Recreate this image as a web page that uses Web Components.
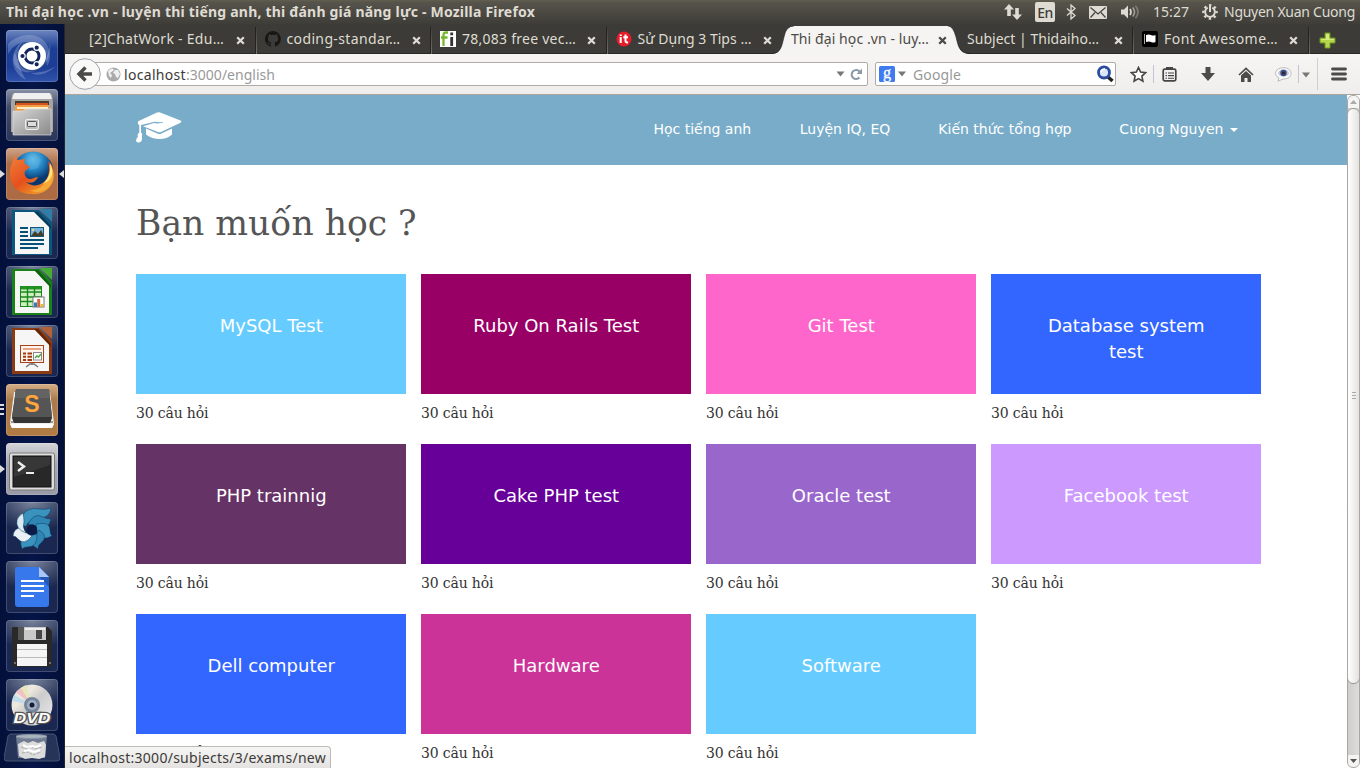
<!DOCTYPE html>
<html lang="vi">
<head>
<meta charset="utf-8">
<title>Thi đại học .vn</title>
<style>
html,body{margin:0;height:100%;overflow:hidden;background:#fff}
</style>
</head>
<body>
<desktop-screen></desktop-screen>
<script>
const UI = `"Noto Sans","Open Sans",sans-serif`;
const define = (name, html, after) => {
  const tpl = document.createElement('template');
  tpl.innerHTML = html;
  customElements.define(name, class extends HTMLElement {
    connectedCallback() {
      if (this.shadowRoot) return;
      const root = this.attachShadow({mode: 'open'});
      root.append(tpl.content.cloneNode(true));
      if (after) after(this, root);
    }
  });
};

/* One line of text whose tracking is adjusted to a given width. */
define('fit-text', `<style>:host{display:block;white-space:nowrap;flex:none}span{display:inline-block}</style><span><slot></slot></span>`, (el, root) => {
  const w = +el.getAttribute('w'), s = root.querySelector('span');
  el.style.width = w + 'px';
  requestAnimationFrame(() => {
    const n = [...el.textContent].length;
    s.style.letterSpacing = ((w - s.getBoundingClientRect().width) / n) + 'px';
  });
});

define('launcher-tile', `<style>
:host{display:block;position:relative;width:52px;height:52px;flex:none;box-sizing:border-box;border-radius:4px;background:var(--tile,radial-gradient(ellipse 90% 55% at 50% 0,#7a849d,#3a4768 60%,#1a2750));box-shadow:inset 0 0 0 1px #ffffff2b}
svg,::slotted(svg){display:block;width:52px;height:52px}
i{position:absolute;top:22px;width:0;height:0;border:4.5px solid transparent;display:none}
:host([run]) .l{display:block;left:-6px;border-left:5px solid #dcdcdc;border-right:0}
:host([focus]) .r{display:block;right:-6px;border-right:5px solid #dcdcdc;border-left:0}
b{display:none;position:absolute;left:-6px;top:20px;width:4px;height:12px;background:repeating-linear-gradient(#dcdcdc 0 2px,transparent 2px 4.5px)}
:host([multi]) b{display:block}
</style><slot></slot><i class="l"></i><i class="r"></i><b></b>`);

define('app-launcher', `<style>
:host{display:flex;flex-direction:column;align-items:flex-start;gap:7px;padding:6px 0 0 6px;box-sizing:border-box;background:linear-gradient(90deg,#03103a,#051548 50%,#03103a 95%);border-right:1px solid #24262e;height:744px;overflow:hidden}
.trash{display:block;margin:-5px 0 0 -2px;flex:none}
</style>
<launcher-tile style="--tile:linear-gradient(#6f87c0,#1c3f95 35%,#1c3d96 70%,#3053ab)"><svg viewBox="0 0 52 52">
<g fill="#c5d3ef" fill-opacity=".28"><path d="M2 14C14 2 34 2 41 15c4 7 4 15 0 21 0-14-9-24-21-24-9 0-14 6-18 12z"/><path d="M44 12c2 18-8 32-25 30C9 40 5 31 9 22c2 10 8 15 16 17 10 0 18-10 19-27z"/><path d="M20 50C4 42 2 22 17 11c-7 9-8 20 3 39z"/><path d="M50 36c-9 9-19 10-25 7 9 0 17-2 25-7z"/></g>
<circle cx="26" cy="27" r="14.5" fill="#0a1f5c" opacity=".4"/><circle cx="26" cy="26" r="14" fill="#fff"/><circle cx="26" cy="26" r="7" fill="none" stroke="#12265c" stroke-width="3"/>
<g fill="#12265c" stroke="#fff" stroke-width="1.2"><circle cx="16.500" cy="26" r="2.700"/><circle cx="30.700" cy="17.700" r="2.700"/><circle cx="30.700" cy="34.300" r="2.700"/></g></svg></launcher-tile>
<launcher-tile style="--tile:linear-gradient(#8a93a8,#414b68 35%,#29355a)"><svg viewBox="0 0 52 52">
<defs><linearGradient id="g" x2="1" y2="1"><stop stop-color="#d6d6d6"/><stop offset="1" stop-color="#898989"/></linearGradient></defs>
<path d="M6 5h40l1 8v30H5V13z" fill="#a5a5a5"/><path d="M8 4h36l2 6H6z" fill="#efefef"/><path d="M9 12h34v12H9z" fill="#4b3a30"/><path d="M10 14h32v8H10z" fill="#d2541e"/><path d="M9 16h34v6H9z" fill="#f39a45"/><path d="M11 18h31v2H11z" fill="#fff0c8"/>
<path d="M7 22h10l3-2h25v26H7z" fill="url(#g)" stroke="#ddd" stroke-width=".7"/><rect x="19.500" y="30.500" width="13" height="10" rx="1.500" fill="#bbb" stroke="#eee"/><rect x="21.500" y="32.500" width="9" height="5" rx="1" fill="#ddd" stroke="#555"/></svg></launcher-tile>
<launcher-tile run focus style="--tile:linear-gradient(#d2a58a,#ab6d47 30%,#ad6b43)"><svg viewBox="0 0 52 52">
<defs><radialGradient id="fb" cx=".5" cy=".2"><stop stop-color="#79c9ed"/><stop offset=".5" stop-color="#2687c6"/><stop offset="1" stop-color="#0a376f"/></radialGradient><linearGradient id="fo" x2=".8" y2="1"><stop stop-color="#f0813a"/><stop offset=".55" stop-color="#e6501d"/><stop offset="1" stop-color="#f0a62c"/></linearGradient></defs>
<circle cx="27" cy="24" r="20.500" fill="url(#fb)"/><path d="M20 12q8-8 15 0l-3 8-8 2z" fill="#52aee0" opacity=".5"/>
<path d="M9 7c0 3 1 4 3 5l7-1c-1 3-1 5 2 6l3 2-5 4c-1 3 0 5 2 7 4 3 7-1 11-1-2 5-7 7-12 5 7 6 18 4 22-6 2-6 1-12 0-15 5 4 8 13 5 20-3 9-12 14-22 13C12 46 4 37 4 26c0-8 2-11 3-13 0-3 1-5 2-6z" fill="url(#fo)"/>
<path d="M43 16c2 7 1 13-4 19-5 6-11 8-16 7 10 5 21 0 24-10 1-6 0-11-4-16z" fill="#f6a936"/><path d="M44 15c1 9-1 15-7 21 5-2 8-5 9-9 1-5 0-8-2-12z" fill="#ffe881"/></svg></launcher-tile>
<launcher-tile><svg viewBox="0 0 52 52"><path d="M6 3h27l13 13v32H6z" fill="#0d567f"/><path d="M34 2h12v13z" fill="#2e7ea7"/><path d="M9 5h21l13 14v28H9z" fill="#f6f6f6"/><path d="M28 5h4l13 14v3z" fill="#063b59"/>
<path d="M14 21h8m-8 4h8m-8 4h8m-8 4h24m-24 4h24m-24 4h18" stroke="#075078" stroke-width="1.800"/><rect x="24.500" y="20.500" width="13" height="9" fill="#77b3dd" stroke="#16587c"/><path d="M25 29l4-5 3 3 3-4 3 6z" fill="#453e24"/><circle cx="27" cy="23" r="1" fill="#ffe16b"/></svg></launcher-tile>
<launcher-tile><svg viewBox="0 0 52 52"><path d="M6 3h27l13 13v33H6z" fill="#188216"/><path d="M34 2h12v12z" fill="#46ad32"/><path d="M9 5h21l13 14v28H9z" fill="#f6f6f6"/><path d="M28 4h4l13 15v3z" fill="#0d610f"/>
<rect x="14.500" y="20.500" width="21" height="20" fill="#cff1c1" stroke="#1a861b"/><path d="M15 22h20" stroke="#239423" stroke-width="3"/><path d="M15 26h20m-20 5h20m-20 4.500h20M21.500 21v19m7-19v19" stroke="#1a861b" stroke-width="1.400"/><rect x="27" y="31" width="11" height="10" fill="#fff" stroke="#777"/><path d="M29.500 41v-4.500" stroke="#2581c4" stroke-width="3"/><path d="M32.700 41v-8" stroke="#dc6434" stroke-width="3"/><path d="M36 41v-3" stroke="#eeb829" stroke-width="2.500"/></svg></launcher-tile>
<launcher-tile><svg viewBox="0 0 52 52"><path d="M6 3h27l13 13v33H6z" fill="#8b3b13"/><path d="M34 2h12v12z" fill="#b46138"/><path d="M9 5h21l13 14v27H9z" fill="#f6f6f6"/><path d="M28 4h4l13 15v3z" fill="#642504"/>
<rect x="14.500" y="20.500" width="23" height="17" fill="#fff4ee" stroke="#a44319"/><path d="M17 24h18" stroke="#e3966d" stroke-width="1.700"/><path d="M17 28.500h3m1.500 0H26m-9 3.200h3m1.500 0H26m-9 3.200h3m1.500 0H26" stroke="#a13b11" stroke-width="2"/><rect x="27.500" y="27.500" width="8" height="7.500" fill="#fff" stroke="#888"/><path d="M29 33l2-2 1.500 1 2.500-3" stroke="#4aa842" stroke-width="1.500" fill="none"/><path d="M26 38v2m-6 2 4-3h4l4 3" stroke="#777" stroke-width="1.500" fill="none"/></svg></launcher-tile>
<launcher-tile multi style="--tile:linear-gradient(#d5ae87,#ab7b4b 30%,#b07b43)"><svg viewBox="0 0 52 52"><path d="M8 8h36l4 31-2 5H6l-2-5z" fill="#eee"/><path d="M4 40h44l-2 4H6z" fill="#fff"/><path d="M5 38h42" stroke="#444"/><path d="M10 5h33l3 29-2 5H8l-2-5z" fill="#353535"/><path d="M10 5h33l3 28H6z" fill="#555"/><path d="M10 5h33l1 9H9z" fill="#777" opacity=".4"/><text x="26" y="28" text-anchor="middle" font-family="Liberation Sans" font-weight="bold" font-size="23" fill="#ffa53c">S</text></svg></launcher-tile>
<launcher-tile run style="--tile:linear-gradient(#d4d5d9,#a6a8b0 40%,#999ca7)"><svg viewBox="0 0 52 52"><rect x="3.500" y="10" width="45" height="37" rx="2" fill="#dedede" stroke="#7a7a7a"/><rect x="7" y="13" width="38" height="31" fill="#282828" stroke="#111"/><path d="M8 14h36v8L8 34z" fill="#fff" opacity=".07"/><path d="M12 19l6 4.500-6 4.500" stroke="#eee" fill="none" stroke-width="2.400"/><path d="M20 30h8" stroke="#eee" stroke-width="2"/></svg></launcher-tile>
<launcher-tile><svg viewBox="0 0 52 52"><g stroke="#0a3763" stroke-width=".5"><path d="M17 24C13 11 22 5 33 7q7 1 12-1-1 9-10 10-11 0-15 8z" fill="#3a93bd"/><path d="M22 22q6-12 15-7 4 2 8 2-2 10-11 9-7-1-12-4z" fill="#2f86b3"/><path d="M30 22q14-3 14 6 0 4 2 6-10 5-14-1-2-5-2-11z" fill="#3a93bd"/><path d="M33 28q10 6 2 13-3 2-3 6-10-5-6-12 5-2 7-7z" fill="#2f86b3"/><path d="M31 32q1 13-10 13-3 0-5 2-4-11 5-14 5 1 10-1z" fill="#3a93bd"/><path d="M26 34q-8 10-14 3-2-3-5-3 1-9 9-8 4 6 10 8z" fill="#e9f1f5"/><path d="M20 31q-11-4-9-13 1-4 6-7 1 5 1 9-2 5 2 11z" fill="#d9eaf2"/></g><circle cx="26" cy="27.500" r="5.200" fill="#0c1b45"/></svg></launcher-tile>
<launcher-tile><svg viewBox="0 0 52 52"><path d="M12 6h21l10 10v27q0 3-3 3H12q-3 0-3-3V9q0-3 3-3z" fill="#3778ec"/><path d="M33 6l10 10H33z" fill="#a9c7fc"/><path d="M33 16h10v10z" fill="#2458b9"/><path d="M15 20h23m-23 5h23m-23 5h23m-23 5h13" stroke="#fff" stroke-width="1.900"/></svg></launcher-tile>
<launcher-tile><svg viewBox="0 0 52 52"><path d="M7 7h35l4 4v36H6V8z" fill="#292929"/><path d="M12 7h6v13h-6z" fill="#555"/><path d="M18 7h22v13H18z" fill="#c9c9c9"/><path d="M19 8h20v2H19z" fill="#eee"/><rect x="30" y="10" width="6" height="9" fill="#464646"/><path d="M11 24h30v22H11z" fill="#f5f5f5"/><path d="M11 29.500h30m-30 8h30" stroke="#bbb"/><circle cx="9" cy="43" r="1" fill="#888"/><circle cx="44" cy="43" r="1" fill="#888"/></svg></launcher-tile>
<launcher-tile><svg viewBox="0 0 52 52"><defs><linearGradient id="d" x2="1" y2="1"><stop stop-color="#ddd"/><stop offset=".3" stop-color="#eee8df"/><stop offset=".5" stop-color="#ccc"/><stop offset="1" stop-color="#eee"/></linearGradient></defs><circle cx="26" cy="26" r="20.500" fill="url(#d)"/><path d="M26 26L10 13l5-4z" fill="#f0c1c7"/><path d="M26 26L15 9l5-3z" fill="#e4e9b4"/><path d="M26 26L8 16l-2 6z" fill="#bedce9"/><circle cx="26" cy="26" r="8" fill="#76869d"/><circle cx="26" cy="26" r="5" fill="#a3b1c3"/><circle cx="26" cy="26" r="2.500" fill="#141c35"/><text x="26" y="43.500" text-anchor="middle" textLength="37" lengthAdjust="spacingAndGlyphs" font-family="Liberation Sans" font-style="italic" font-weight="bold" font-size="15" fill="#fff" stroke="#555" stroke-width="2.500" paint-order="stroke">DVD</text></svg></launcher-tile>
<svg class="trash" width="56" height="31" viewBox="0 0 56 31"><path d="M7 1h42q2 0 3 2l4 22q0 3-3 3H3q-3 0-3-3L4 3q1-2 3-2z" fill="#26345a" stroke="#465471"/><path d="M12 3h31l-2 22H14z" fill="#8793a3" opacity=".75"/><ellipse cx="27.500" cy="3.500" rx="15.500" ry="2" fill="#aab4c0" stroke="#8793a3"/><path d="M14 11l6-3 4 2 5-2 5 2 6-2 2 4-1 12-6 2-7-1-7 1-6-3z" fill="#dcdcdc"/><path d="M17 14l5 2 4-3 5 3 7-2M18 20l6-1 5 3 8-3" stroke="#aaa" fill="none" stroke-dasharray="3 1"/><path d="M19 12l4 2 5-1 4 1 5-2m-17 6 5-1 5 2 6-2" stroke="#fff" stroke-width="2" fill="none"/></svg>`);

define('top-panel', `<style>
:host{display:flex;align-items:center;height:24px;box-sizing:border-box;padding-left:6px;background:linear-gradient(#625f50 0,#57544c 2px,#3e3d38);color:#dfdbd2;font:15px/24px ${UI}}
svg{display:block;flex:none}.sp{flex:1}
.t{font-weight:700;font-size:14px}
.en{width:20px;height:20px;border-radius:2px;background:#dfdbd2;color:#3c3b37;font:500 14px/21px ${UI};text-align:center;letter-spacing:-.6px}
.n{font-size:14px}
</style>
<fit-text class="t" w="529">Thi đại học .vn - luyện thi tiếng anh, thi đánh giá năng lực - Mozilla Firefox</fit-text><span class="sp"></span>
<svg width="18" height="16" viewBox="0 0 18 16" fill="#dfdbd2"><path d="M5 0l5 5.500H6.800V12H3.200V5.500H0z"/><path d="M13 16l-5-5.500h3.200V4h3.600v6.500H18z"/></svg>
<div class="en" style="margin-left:13px">En</div>
<svg style="margin-left:11px" width="10" height="16" viewBox="0 0 10 16" fill="none" stroke="#dfdbd2" stroke-width="1.300"><path d="M1 4.500l8 7L5 15V1l4 3.500-8 7"/></svg>
<svg style="margin-left:13px" width="18" height="13" viewBox="0 0 18 13"><rect width="18" height="13" rx="1" fill="#dfdbd2"/><path d="M1.500 1.500L9 8l7.500-6.500M1.500 11.500L6 6.500m10.500 5L12 6.500" stroke="#44423d" stroke-width="1.200" fill="none"/></svg>
<svg style="margin-left:13px" width="20" height="16" viewBox="0 0 20 16" fill="none" stroke="#dfdbd2" stroke-width="1.600"><path d="M1 5.500h3l4-4v13l-4-4H1z" fill="#dfdbd2" stroke="none"/><path d="M10 5q2 3 0 6"/><path d="M12.800 3.500q3.500 4.500 0 9" opacity=".6"/><path d="M15.500 1.800q5 6.200 0 12.400" opacity=".35"/></svg>
<fit-text class="n" style="margin-left:13px" w="36">15:27</fit-text>
<svg style="margin-left:13px" width="16" height="16" viewBox="-8 -8 16 16" fill="none" stroke="#dfdbd2"><path d="M-2.300-4.300A4.900 4.900 0 1 0 2.300-4.300" stroke-width="2"/><path d="M0-7.500V0" stroke-width="2"/><circle r="6.700" stroke-width="2.200" stroke-dasharray="2.400 2.862" stroke-dashoffset="1.200"/></svg>
<fit-text class="n" style="margin:0 5px 0 6px" w="131">Nguyen Xuan Cuong</fit-text>`);

define('browser-tab', `<style>
:host{display:flex;align-items:center;position:relative;width:175.5px;height:30px;flex:none;box-sizing:border-box;padding-left:8px;color:#dfdbd2;font:14px/30px ${UI}}
:host([sep])::after{content:"";position:absolute;right:0;top:3px;width:1px;height:27px;background:linear-gradient(#3c3b37,#777469);box-shadow:-1px 0 #24231f}
:host([active]){color:#4c4a46;z-index:2}
.shape{position:absolute;left:-11px;top:1px;display:none}:host([active]) .shape{display:block}
.x{position:absolute;left:155px;top:11.500px}
::slotted(*){position:relative;margin-right:6px;display:block}
::slotted(fit-text){margin:0}
</style>
<svg class="shape" width="198" height="30" viewBox="0 0 198 30"><path d="M0 29C9 29 10 20 12 12Q14 1 22 1H176Q181 1 184 12C186 20 187 29 198 29V30H0z" fill="#f5f4f2"/><path d="M0 28.500C9 28.500 10 20 12 12Q14 1 22 1M176 1Q181 1 184 12C186 20 187 28.500 198 28.500" fill="none" stroke="#22211e" stroke-width=".8" opacity=".7"/></svg>
<slot></slot>
<svg class="x" width="9" height="9" viewBox="0 0 9 9"><path d="M1.200 1.200l6.600 6.600m0-6.600l-6.600 6.600" stroke="currentColor" stroke-width="2.300"/></svg>`);

define('tab-strip', `<style>
:host{display:flex;height:30px;padding-left:16px;background:#3c3b37;box-shadow:inset 0 -1px #2a2926;box-sizing:border-box}
.plus{margin:8px 0 0 9px}
</style>
<browser-tab sep><fit-text w="135">[2]ChatWork - Edu…</fit-text></browser-tab>
<browser-tab sep><svg width="16" height="16" viewBox="0 0 16 16"><path fill="#181716" d="M8 0a8 8 0 0 0-2.500 15.600c.4.100.5-.2.500-.4v-1.500c-2.200.5-2.700-.9-2.700-.9-.4-1-.9-1.200-.9-1.200-.7-.5.100-.5.100-.5.800.1 1.200.8 1.200.8.7 1.200 1.900.9 2.300.7.100-.5.300-.9.500-1.100-1.800-.2-3.600-.9-3.600-4 0-.9.300-1.600.800-2.100-.1-.2-.4-1 .100-2.100 0 0 .7-.2 2.200.8a7.600 7.600 0 0 1 4 0c1.500-1 2.200-.8 2.200-.8.4 1.100.2 1.900.1 2.100.5.600.8 1.300.8 2.100 0 3.100-1.900 3.700-3.700 3.900.3.300.6.800.6 1.500v2.200c0 .2.100.5.600.4A8 8 0 0 0 8 0z"/></svg><fit-text w="114">coding-standar…</fit-text></browser-tab>
<browser-tab sep><svg width="16" height="16" viewBox="0 0 16 16"><path d="M0 0h16v16H0z" fill="#fff"/><path d="M3.500 15V4q0-2.500 2.500-2.500h2M1 6.500h6.500" stroke="#76b82a" stroke-width="2.300" fill="none"/><path d="M11.700 15V6m0-4.500v2.800" stroke="#333" stroke-width="2.800"/></svg><fit-text w="114">78,083 free vec…</fit-text></browser-tab>
<browser-tab><svg width="16" height="16" viewBox="0 0 16 16"><circle cx="8" cy="8" r="7.500" fill="#e71c2b"/><path d="M4.700 6v6m0-8.500v1.500M9.500 3.500V10q0 1.800 2.500 1.300M7.300 6.300H12" stroke="#fff" stroke-width="2" fill="none"/></svg><fit-text w="114">Sử Dụng 3 Tips …</fit-text></browser-tab>
<browser-tab active><fit-text w="138">Thi đại học .vn - luy…</fit-text></browser-tab>
<browser-tab sep><fit-text style="margin-left:.5px" w="132">Subject | Thidaiho…</fit-text></browser-tab>
<browser-tab sep><svg width="16" height="16" viewBox="0 0 16 16"><rect width="16" height="16" rx="2" fill="#000"/><path d="M2.500 3v10" stroke="#aaa"/><path d="M4 4q3-1 5 0t4.500 0V11q-2.500 1-4.500 0t-5 0z" fill="#fff"/></svg><fit-text w="114">Font Awesome…</fit-text></browser-tab>
<svg class="plus" width="17" height="17" viewBox="0 0 17 17"><path d="M6 1h5v5h5v5h-5v5H6v-5H1V6h5z" fill="#b5d64b" stroke="#6f9623"/><path d="M7 2h3v5h5v1H2V7h5z" fill="#e3f19a" opacity=".7"/></svg>`);

define('nav-toolbar', `<style>
:host{display:flex;align-items:center;height:41px;box-sizing:border-box;padding-left:4px;background:linear-gradient(#f6f5f3,#efeeec);border-bottom:1px solid #aaa69f;font:14px/22px ${UI};color:#3c3b37;position:relative}
svg{display:block;flex:none}
.back{z-index:1;margin-right:-14px}
.f{display:flex;align-items:center;height:24px;box-sizing:border-box;border:1px solid #b0aca5;border-radius:2px;background:#fff;flex:none}
.url{width:783px;padding-left:20px;margin-right:7px}.sr{width:241px;padding-left:3px}
.sp{flex:1}.g{color:#999}fit-text{margin-top:1px}
.cell{display:flex;justify-content:center;width:38px;flex:none}
.line{width:1px;height:18px;background:#bfc8d2;flex:none}
</style>
<svg class="back" width="32" height="32" viewBox="0 0 32 32"><circle cx="16" cy="16" r="15.300" fill="#f9f9f8" stroke="#9da3ab"/><path d="M16.500 9.500L10 16l6.500 6.500M10.500 16H23" stroke="#4b4a48" stroke-width="3.400" fill="none"/></svg>
<div class="f url" style="margin-left:-2px"><svg width="15" height="15" viewBox="0 0 15 15"><circle cx="7.500" cy="7.500" r="7" fill="#aaa"/><path d="M2 4l3-2.500 3 .5-1 2-3 2 2 2-1 3-2-2zM9 3l3 0 2 4-2 4-2-1-1-3-2-1z" fill="#f0f0f0"/></svg>
<fit-text style="margin-left:3px" w="62">localhost</fit-text><fit-text class="g" w="89">:3000/english</fit-text><span class="sp"></span>
<svg width="9" height="6" viewBox="0 0 9 6"><path d="M.5.500h8l-4 5z" fill="#777"/></svg><svg style="margin:0 4px 0 5px" width="13" height="13" viewBox="0 0 13 13"><path d="M9.500 9.500A4.500 4.500 0 1 1 9.500 3.500" fill="none" stroke="#8d9aa6" stroke-width="2"/><path d="M12 .5V6H6.500z" fill="#8d9aa6"/></svg></div>
<div class="f sr"><svg width="16" height="16" viewBox="0 0 16 16" overflow="visible"><rect width="16" height="16" rx="1.500" fill="#3f7af0"/><text x="8" y="11.500" text-anchor="middle" font-family="Liberation Serif" font-size="16" fill="#fff" stroke="#fff" stroke-width=".3">g</text></svg><svg style="margin:0 7px 0 3px" width="8" height="6" viewBox="0 0 8 6"><path d="M0 .5h8L4 5.500z" fill="#777"/></svg><fit-text class="g" w="48">Google</fit-text><span class="sp"></span>
<svg style="margin-right:1px" width="18" height="18" viewBox="0 0 18 18"><path d="M12 12l4.500 4" stroke="#222" stroke-width="3.500"/><circle cx="8" cy="7.500" r="5.500" fill="#d7e8fa" stroke="#2d4ca0" stroke-width="2.800"/><path d="M5 7q1-3 4-3" stroke="#fff" stroke-width="1.500" fill="none"/></svg></div>
<span class="cell" style="margin-left:3px;width:38px"><svg width="17" height="17" viewBox="0 0 17 17"><path d="M8.500 1.500l2.100 4.600 5 .6-3.700 3.400 1 5-4.400-2.500-4.400 2.500 1-5L1.400 6.700l5-.6z" fill="#fff" stroke="#454545" stroke-width="1.600"/></svg></span>
<span class="line" style="margin-left:-4px"></span>
<span class="cell" style="width:31px"><svg width="15" height="16" viewBox="0 0 15 16"><rect x="1.200" y="3.200" width="12.600" height="11.600" rx="1.500" fill="none" stroke="#454545" stroke-width="1.700"/><path d="M4 1h7v3H4z" fill="#454545"/><path d="M3.500 7h1.500m1 0h6m-8.500 2.600h1.500m1 0h6m-8.500 2.600h1.500m1 0h6" stroke="#454545" stroke-width="1.100"/></svg></span>
<span class="cell" style="width:45px"><svg width="14" height="14" viewBox="0 0 14 14"><path d="M4.500 0h5v6H14l-7 8-7-8h4.500z" fill="#4b4b4b"/></svg></span>
<span class="cell" style="width:31px"><svg width="16" height="15" viewBox="0 0 16 15"><path d="M1 8l7-6.500L15 8" fill="none" stroke="#4b4b4b" stroke-width="1.700"/><path d="M3 8.500L8 4l5 4.500V15H9.500v-4h-3v4H3z" fill="#4b4b4b"/></svg></span>
<span class="cell" style="width:45px"><svg width="17" height="15" viewBox="0 0 17 15"><path d="M8.500.7C13 .7 16 3 16 6.500S13 12 8 12l-5 2.200L4 11C-2 8 0 .7 8.500.700z" fill="#fcfcfc" stroke="#aaa" stroke-width=".8"/><ellipse cx="8.500" cy="6" rx="5.500" ry="3.700" fill="#bfc9df"/><circle cx="8.500" cy="6" r="3.200" fill="#3b4d82"/><circle cx="8.500" cy="6" r="1.600" fill="#3b2227"/></svg></span>
<span class="line" style="margin-left:-8px"></span><svg style="margin:2px 0 0 3px" width="8" height="6" viewBox="0 0 8 6"><path d="M0 .5h8L4 5.500z" fill="#777"/></svg>
<span class="line" style="height:32px;margin-left:7px;opacity:.8"></span>
<svg style="margin-left:13px" width="16" height="14" viewBox="0 0 16 14"><path d="M1.500 2h13m-13 5h13m-13 5h13" stroke="#4b4b4b" stroke-width="2.800" stroke-linecap="round"/></svg>`);

define('site-header', `<style>
:host{display:flex;align-items:center;height:70px;box-sizing:border-box;padding:0 109.5px 0 71px;background:#78acc9;color:#fff;font:14px/20px "DejaVu Sans",sans-serif}
svg{display:block;margin-top:-5px}nav{display:flex;gap:48px;margin-left:auto;margin-top:-2px}a{white-space:nowrap}
i{display:inline-block;border:4.5px solid transparent;border-top-color:#fff;border-bottom:0;margin-left:6px;vertical-align:middle}
</style>
<svg width="46" height="31" viewBox="0 0 46 31"><path d="M23.500.300L44.500 8.500q1.500 1 0 2.200L25 20q-1.500.7-3 0L7 14.300 18 11q4 1 9-.5v-.8q-4 1-8.300.1L5 13v7.500q2 1.500.8 3.500 1 5-1.500 6-4 1.500-4.300-1.500Q.5 26 2 24.500.8 22 3.300 20.500V13.200Q1 12 2.200 9.200L21 .600q1.200-.6 2.500-.300z" fill="#fff"/><path d="M10 16.500L22 21.800q1.500.6 3 0L36 16.500v6Q31 27 23.500 27T10 22.500z" fill="#fff"/></svg>
<nav><a style="margin-right:.6px">Học tiếng anh</a><a>Luyện IQ, EQ</a><a>Kiến thức tổng hợp</a><a style="letter-spacing:.06px">Cuong Nguyen<i></i></a></nav>`);

define('subject-card', `<style>
:host{display:block;height:170px}
.b{height:120px;box-sizing:border-box;padding:39px 50px 0 50.500px;background:var(--c);color:#fff;text-align:center;font:18px/26px "DejaVu Sans",sans-serif}
.c{margin-top:9px;font:14px/20px "DejaVu Serif",serif;letter-spacing:-.15px;color:#333}
</style><div class="b"><slot></slot></div><div class="c">30 câu hỏi</div>`);

define('subject-page', `<style>
:host{display:block;flex:1;min-width:0;background:#fff;overflow:hidden}
main{padding:38px 0 0 71px}
h1{margin:0 0 32px;font:400 36px/39px "DejaVu Serif",serif;color:#555;transform:scaleX(.96);transform-origin:0 0}
section{display:grid;grid-template-columns:repeat(4,270px);column-gap:15px}
</style><site-header></site-header><main><h1>Bạn muốn học ?</h1><section>
<subject-card style="--c:#66ccff">MySQL Test</subject-card><subject-card style="--c:#990066">Ruby On Rails Test</subject-card><subject-card style="--c:#ff66cc">Git Test</subject-card><subject-card style="--c:#3366ff">Database system test</subject-card>
<subject-card style="--c:#663366">PHP trainnig</subject-card><subject-card style="--c:#660099">Cake PHP test</subject-card><subject-card style="--c:#9966cc">Oracle test</subject-card><subject-card style="--c:#cc99ff">Facebook test</subject-card>
<subject-card style="--c:#3366ff">Dell computer</subject-card><subject-card style="--c:#cc3399">Hardware</subject-card><subject-card style="--c:#66ccff">Software</subject-card>
</section></main>`);

define('page-scrollbar', `<style>
:host{display:flex;flex-direction:column;width:13px;box-sizing:border-box;border:1px solid #aaa7a2;border-radius:6px;background:linear-gradient(90deg,#d0cecb,#dedcda);overflow:hidden}
.a{height:12px;display:flex;align-items:center;justify-content:center;background:#f5f4f3;flex:none}
.th{height:576px;margin:0 -1px;border:1px solid #9b9892;border-radius:6px;box-sizing:border-box;background:linear-gradient(90deg,#fff,#e4e2e0);display:flex;align-items:center;justify-content:center}
.th i{width:4px;height:8px;background:repeating-linear-gradient(#aaa 0 1px,transparent 1px 3px)}
.sp{flex:1}
</style><div class="a"><svg width="7" height="4"><path d="M0 4h7L3.500 0z" fill="#aaa"/></svg></div><div class="th"><i></i></div><div class="sp"></div><div class="a"><svg width="7" height="4"><path d="M0 0h7L3.500 4z" fill="#555"/></svg></div>`);

define('link-status', `<style>
:host{position:absolute;left:0;bottom:0;width:266px;height:22px;box-sizing:border-box;padding-left:4px;border:1px solid #bebbb7;border-width:1px 1px 0 0;border-radius:0 4px 0 0;background:linear-gradient(#f6f6f5,#e3e2e1);color:#3c3b37;font:14px/21px ${UI}}
</style><fit-text w="257">localhost:3000/subjects/3/exams/new</fit-text>`);

define('desktop-screen', `<style>
:host{display:grid;grid-template:24px 744px / 65px 1295px;width:1360px;height:768px;overflow:hidden}
top-panel{grid-column:1/3}
.w{display:flex;flex-direction:column;position:relative;min-width:0;height:744px}
.v{display:flex;flex:1;min-height:0}
</style><top-panel></top-panel><app-launcher></app-launcher>
<div class="w"><tab-strip></tab-strip><nav-toolbar></nav-toolbar><div class="v"><subject-page></subject-page><page-scrollbar></page-scrollbar></div><link-status></link-status></div>`);
</script>
</body>
</html>
